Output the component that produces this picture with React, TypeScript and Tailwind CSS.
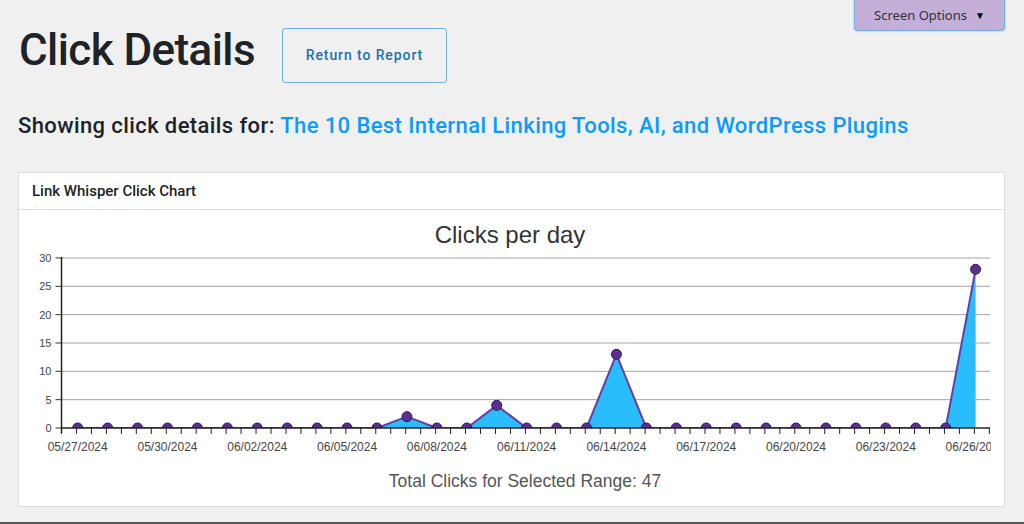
import React from "react";

const values = [0, 0, 0, 0, 0, 0, 0, 0, 0, 0, 0, 2, 0, 0, 4, 0, 0, 0, 13, 0, 0, 0, 0, 0, 0, 0, 0, 0, 0, 0, 28];

const startDay = new Date(2024, 4, 27);

function dateLabel(i: number) {
  const d = new Date(startDay.getTime() + i * 86400000);
  const mm = String(d.getMonth() + 1).padStart(2, "0");
  const dd = String(d.getDate()).padStart(2, "0");
  return `${mm}/${dd}/${d.getFullYear()}`;
}

// chart coordinates are relative to the card body (left 19, top 210)
const OX = 19;
const OY = 210;
const step = 29.93;
const xAt = (i: number) => 77.7 + i * step - OX;
const yAt = (v: number) => 428 - v * 5.667 - OY;
const axisL = 61.5 - OX;
const axisR = 990 - OX;
const base = yAt(0);

function ClickChart() {
  const pts = values.map((v, i) => `${xAt(i)},${yAt(v)}`).join(" ");
  const area = `${xAt(0)},${base} ${pts} ${xAt(30)},${base}`;
  const halfTicks = Array.from({ length: 63 }, (_, k) => axisL + k * (step / 2));

  return (
    <svg width="984" height="296" viewBox="0 0 984 296" className="block">
      <defs>
        <clipPath id="plot">
          <rect x={axisL} y={0} width={axisR - axisL} height={base} />
        </clipPath>
        <clipPath id="xlabels">
          <rect x={0} y={base} width={axisR + 1} height={60} />
        </clipPath>
      </defs>

      <text
        x={510 - OX}
        y={243 - OY}
        textAnchor="middle"
        fontFamily="'Liberation Sans', Arial, sans-serif"
        fontSize="24"
        fill="#333"
      >
        Clicks per day
      </text>

      {/* grid + y ticks */}
      {[5, 10, 15, 20, 25, 30].map((v) => (
        <line key={v} x1={axisL} x2={axisR} y1={yAt(v)} y2={yAt(v)} stroke="#a3a3a3" strokeWidth="1" />
      ))}
      {[0, 5, 10, 15, 20, 25, 30].map((v) => (
        <g key={v}>
          <line x1={axisL - 6} x2={axisL} y1={yAt(v)} y2={yAt(v)} stroke="#333" strokeWidth="1" />
          <text
            x={axisL - 10}
            y={yAt(v) + 4}
            textAnchor="end"
            fontFamily="'Liberation Sans', Arial, sans-serif"
            fontSize="11"
            fill="#444"
          >
            {v}
          </text>
        </g>
      ))}

      {/* area + line + points */}
      <g clipPath="url(#plot)">
        <polygon points={area} fill="#29bdfb" />
        <polyline points={pts} fill="none" stroke="#6a3ea1" strokeWidth="2" strokeLinejoin="round" />
        {values.map((v, i) => (
          <circle key={i} cx={xAt(i)} cy={yAt(v)} r="5" fill="#5e2f92" stroke="#2b1846" strokeWidth="1" />
        ))}
      </g>

      {/* axes */}
      <line x1={axisL} x2={axisL} y1={yAt(30) - 1} y2={base + 5} stroke="#222" strokeWidth="1.5" />
      <line x1={axisL} x2={axisR} y1={base} y2={base} stroke="#222" strokeWidth="1.5" />
      {halfTicks.map((x, k) => (
        <line key={k} x1={x} x2={x} y1={base} y2={base + 6} stroke="#222" strokeWidth="1" />
      ))}

      <g clipPath="url(#xlabels)">
        {values.map((_, i) =>
          i % 3 === 0 ? (
            <text
              key={i}
              x={xAt(i)}
              y={base + 23}
              textAnchor="middle"
              fontFamily="'Liberation Sans', Arial, sans-serif"
              fontSize="12"
              fill="#444"
            >
              {dateLabel(i)}
            </text>
          ) : null
        )}
      </g>

      <text
        x={525 - OX}
        y={487 - OY}
        textAnchor="middle"
        fontFamily="'Liberation Sans', Arial, sans-serif"
        fontSize="17.5"
        fill="#555"
      >
        Total Clicks for Selected Range: 47
      </text>
    </svg>
  );
}

export default function App() {
  return (
    <div
      className="relative flex h-[524px] w-full flex-col overflow-hidden bg-[#f0f0f1]"
      style={{ fontFamily: "Roboto, 'Noto Sans', sans-serif" }}
    >
      {/* Screen options tab */}
      <button
        className="absolute right-[19px] top-[-2px] flex h-[33px] w-[151px] items-center justify-center gap-[8px] rounded-b-[4px] border border-[#72aee6] bg-[#c3afd7] pt-[2px] text-[13px] text-[#2c3338] shadow-[0_0_2px_#72aee6]"
        style={{ fontFamily: "'Noto Sans', sans-serif" }}
      >
        <span>Screen Options</span>
        <span className="text-[10px] text-black">▼</span>
      </button>

      {/* Title row */}
      <div className="flex items-start pl-[19px] pt-[28px]">
        <h1 className="mt-[-8px] text-[44px] font-medium leading-[60px] tracking-[-0.6px] text-[#1d2327]">
          Click Details
        </h1>
        <a className="ml-[27px] flex h-[55px] w-[165px] items-center justify-center rounded-[3px] border border-[#72aee6] text-[14px] font-medium tracking-[0.9px] text-[#2271b1]">
          Return to Report
        </a>
      </div>

      <p className="mt-[28px] pl-[18px] text-[22px] font-medium leading-[30px] tracking-[0.4px] text-[#1d2327]">
        Showing click details for:{" "}
        <a className="text-[#0b9bff]">The 10 Best Internal Linking Tools, AI, and WordPress Plugins</a>
      </p>

      {/* Chart card */}
      <div className="ml-[18px] mr-[19px] mt-[31px] border border-[#dcdcde] bg-white">
        <div className="flex h-[37px] items-center border-b border-[#dcdcde] pl-[13px] text-[15px] font-medium text-[#1d2327]">
          Link Whisper Click Chart
        </div>
        <ClickChart />
      </div>

      <div className="mt-auto h-[2px] bg-[#5a5a5a]" />
    </div>
  );
}
